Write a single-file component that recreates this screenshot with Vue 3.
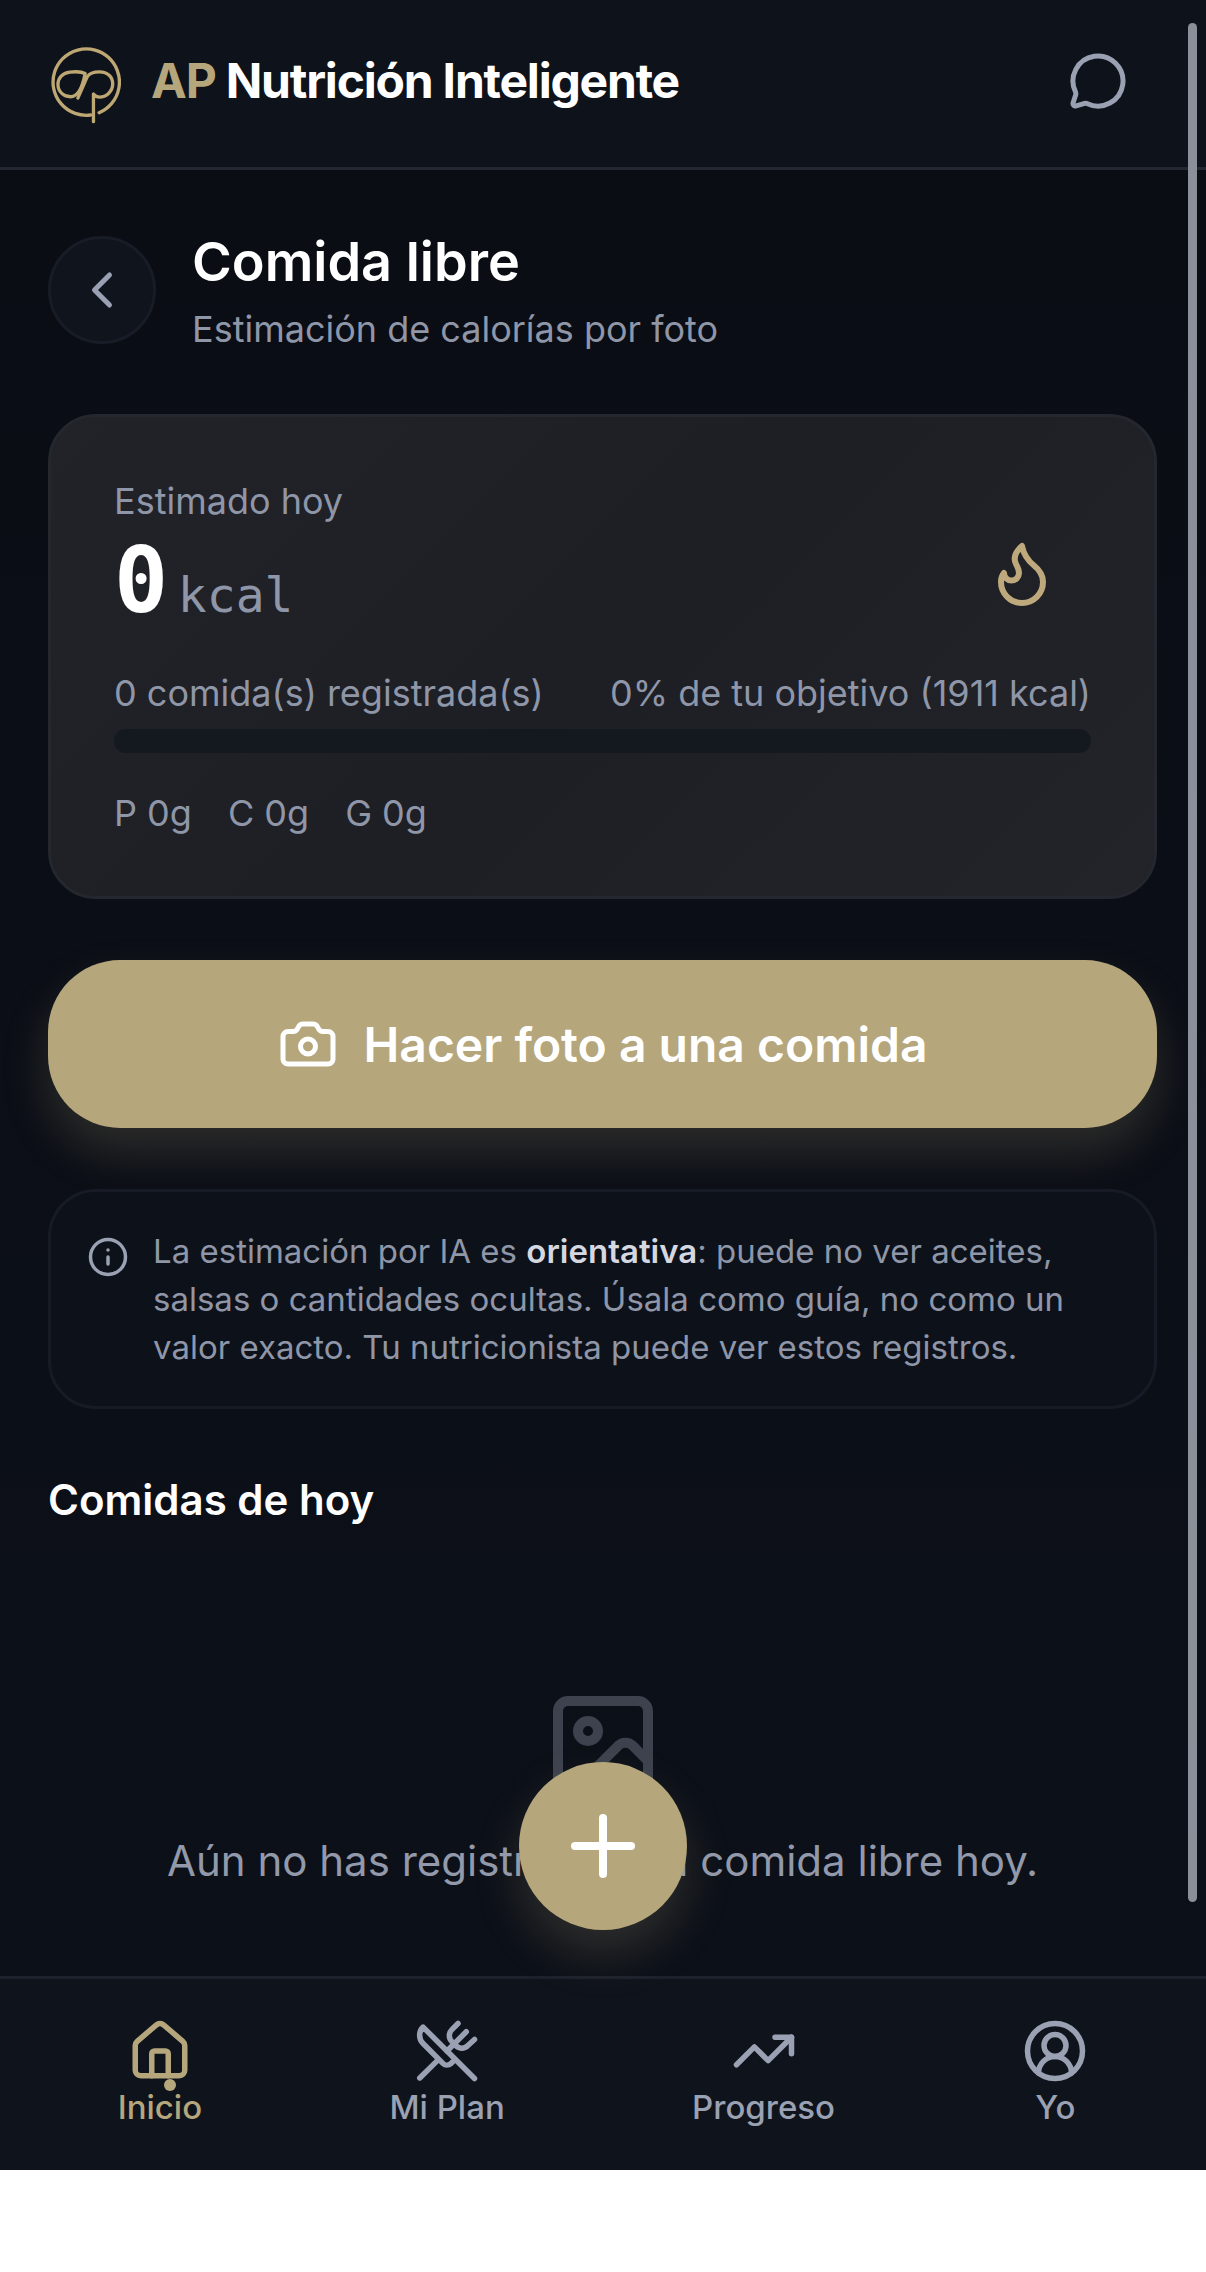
<script setup>
const macros = ["P 0g", "C 0g", "G 0g"];

// bottom tabs, icons are 24x24 stroke paths
const tabs = [
  {
    label: "Inicio",
    active: true,
    paths: [
      "M15 21v-8a1 1 0 0 0-1-1h-4a1 1 0 0 0-1 1v8",
      "M3 10a2 2 0 0 1 .709-1.528l7-5.999a2 2 0 0 1 2.582 0l7 5.999A2 2 0 0 1 21 10v9a2 2 0 0 1-2 2H5a2 2 0 0 1-2-2z"
    ]
  },
  {
    label: "Mi Plan",
    paths: [
      "m16 2-2.3 2.3a3 3 0 0 0 0 4.2l1.6 1.6a3 3 0 0 0 4.2 0L22 7.8",
      "M15 15 3.3 3.3a4.2 4.2 0 0 0 0 6l7.3 7.3c.7.7 2 .7 2.8 0L15 15Zm0 0 7 7",
      "m2.1 21.8 6.4-6.3",
      "m19 5-7 7"
    ]
  },
  {
    label: "Progreso",
    paths: ["M22 7 13.5 15.5 8.5 10.5 2 17", "M16 7h6v6"]
  },
  {
    label: "Yo",
    paths: [
      "M18 20a6 6 0 0 0-12 0",
      "M8 10a4 4 0 1 0 8 0a4 4 0 1 0-8 0",
      "M2 12a10 10 0 1 0 20 0a10 10 0 1 0-20 0"
    ]
  }
];
</script>

<template>
  <div class="app">
    <header class="topbar">
      <div class="brand">
        <svg class="logo" viewBox="60 40 220 265" fill="none" stroke="#bda874" stroke-width="10" stroke-linecap="round" stroke-linejoin="round">
          <path d="M188 275A100 100 0 1 1 214 268" />
          <path d="M172 150C160 144 140 144 126 146C102 149 90 165 90 183C90 205 108 220 128 220C150 220 164 190 172 150" />
          <path d="M150 224L178 160C186 147 200 145 215 145C240 145 255 160 255 181C255 205 235 221 215 221C208 221 202 218 197 212V295" />
        </svg>
        <span class="brand-name"><span class="gold">AP</span> Nutrición Inteligente</span>
      </div>
      <svg class="chat" viewBox="0 0 24 24" fill="none" stroke="#9aa1b2" stroke-width="2" stroke-linecap="round" stroke-linejoin="round">
        <path d="M2.992 16.342a2 2 0 0 1 .094 1.167l-1.065 3.29a1 1 0 0 0 1.236 1.168l3.413-.998a2 2 0 0 1 1.099.092 10 10 0 1 0-4.777-4.719" />
      </svg>
    </header>

    <main class="content">
      <div class="page-head">
        <button class="back">
          <svg viewBox="0 0 24 24" fill="none" stroke="#9aa1b2" stroke-width="2" stroke-linecap="round" stroke-linejoin="round">
            <path d="m15 18-6-6 6-6" />
          </svg>
        </button>
        <div>
          <h1>Comida libre</h1>
          <p class="subtitle">Estimación de calorías por foto</p>
        </div>
      </div>

      <section class="summary">
        <div class="summary-top">
          <div>
            <div class="muted">Estimado hoy</div>
            <div class="total"><span class="zero">0</span> <span class="unit">kcal</span></div>
          </div>
          <svg class="flame" viewBox="0 0 24 24" fill="none" stroke="#bda97c" stroke-width="2" stroke-linecap="round" stroke-linejoin="round">
            <path d="M8.5 14.5A2.5 2.5 0 0 0 11 12c0-1.38-.5-2-1-3-1.072-2.143-.224-4.054 2-6 .5 2.5 2 4.9 4 6.5 2 1.6 3 3.5 3 5.5a7 7 0 1 1-14 0c0-1.153.433-2.294 1-3a2.5 2.5 0 0 0 2.5 2.5z" />
          </svg>
        </div>
        <div class="progress-row muted">
          <span>0 comida(s) registrada(s)</span>
          <span>0% de tu objetivo (1911 kcal)</span>
        </div>
        <div class="bar"></div>
        <div class="macros muted">
          <span v-for="m in macros" :key="m">{{ m }}</span>
        </div>
      </section>

      <button class="photo-btn">
        <svg viewBox="0 0 24 24" fill="none" stroke="#fff" stroke-width="2" stroke-linecap="round" stroke-linejoin="round">
          <path d="M13.997 4a2 2 0 0 1 1.76 1.05l.486.9A2 2 0 0 0 18.003 7H20a2 2 0 0 1 2 2v9a2 2 0 0 1-2 2H4a2 2 0 0 1-2-2V9a2 2 0 0 1 2-2h1.997a2 2 0 0 0 1.759-1.048l.489-.904A2 2 0 0 1 10.004 4z" />
          <circle cx="12" cy="13" r="3" />
        </svg>
        Hacer foto a una comida
      </button>

      <div class="notice">
        <svg viewBox="0 0 24 24" fill="none" stroke="#9aa1b2" stroke-width="2" stroke-linecap="round" stroke-linejoin="round">
          <circle cx="12" cy="12" r="10" />
          <path d="M12 16v-4" />
          <path d="M12 8h.01" />
        </svg>
        <p>La estimación por IA es <strong>orientativa</strong>: puede no ver aceites, salsas o cantidades ocultas. Úsala como guía, no como un valor exacto. Tu nutricionista puede ver estos registros.</p>
      </div>

      <h2>Comidas de hoy</h2>

      <div class="empty">
        <svg viewBox="0 0 24 24" fill="none" stroke="#3d424e" stroke-width="2" stroke-linecap="round" stroke-linejoin="round">
          <rect x="3" y="3" width="18" height="18" rx="2" />
          <circle cx="9" cy="9" r="2" />
          <path d="m21 15-3.086-3.086a2 2 0 0 0-2.828 0L6 21" />
        </svg>
        <p>Aún no has registrado una comida libre hoy.</p>
      </div>
    </main>

    <nav class="tabs">
      <div v-for="tab in tabs" :key="tab.label" class="tab" :class="{ active: tab.active }">
        <svg viewBox="0 0 24 24" fill="none" stroke="currentColor" stroke-width="2" stroke-linecap="round" stroke-linejoin="round">
          <path v-for="d in tab.paths" :key="d" :d="d" />
        </svg>
        <span>{{ tab.label }}</span>
        <i v-if="tab.active" class="dot"></i>
      </div>
    </nav>

    <button class="fab">
      <svg viewBox="0 0 24 24" fill="none" stroke="#fff" stroke-width="2" stroke-linecap="round" stroke-linejoin="round">
        <path d="M5 12h14" />
        <path d="M12 5v14" />
      </svg>
    </button>

    <div class="scrollbar"></div>
  </div>
</template>

<style>
body {
  background: #fff;
}
</style>

<style scoped>
.app {
  position: relative;
  display: flex;
  flex-direction: column;
  width: 1206px;
  height: 2170px;
  overflow: hidden;
  background: #0b0e15;
  color: #fff;
  font-family: Inter, "Liberation Sans", sans-serif;
}

.topbar {
  display: flex;
  flex: none;
  align-items: center;
  justify-content: space-between;
  box-sizing: border-box;
  height: 170px;
  padding: 0 78px 6px 48px;
  background: #0e121b;
  border-bottom: 3px solid #232732;
}

.brand {
  display: flex;
  align-items: center;
  gap: 30px;
}

.logo {
  width: 73px;
  height: 88px;
}

.brand-name {
  font-size: 48px;
  font-weight: 700;
  letter-spacing: -1.2px;
}

.gold {
  color: #b5a67c;
}

.chat {
  width: 60px;
  height: 60px;
}

.content {
  flex: 1;
  min-height: 0;
  padding: 56px 49px 0 48px;
  background: linear-gradient(#0a0d14, #0c1018);
}

.page-head {
  display: flex;
  align-items: center;
  gap: 36px;
  margin-bottom: 61px;
}

.back {
  display: flex;
  align-items: center;
  justify-content: center;
  box-sizing: border-box;
  width: 108px;
  height: 108px;
  padding: 0;
  background: #10141d;
  border: 3px solid #181c26;
  border-radius: 50%;
}

.back svg {
  width: 60px;
  height: 60px;
}

h1 {
  margin: 0;
  font-size: 54px;
  font-weight: 600;
  line-height: 72px;
}

.subtitle {
  margin: 7px 0 0;
  font-size: 36px;
  line-height: 48px;
  color: #8f96a8;
}

.muted {
  font-size: 36px;
  line-height: 48px;
  color: #8f96a8;
}

.summary {
  box-sizing: border-box;
  height: 485px;
  padding: 60px 63px;
  background: linear-gradient(135deg, #212328 0%, #1d1f25 50%, #222429 100%);
  border: 3px solid #25272e;
  border-radius: 48px;
}

.summary-top {
  display: flex;
  align-items: center;
  justify-content: space-between;
  padding-right: 33px;
}

.total {
  height: 144px;
  font-family: "DejaVu Sans Mono", "Liberation Mono", monospace;
  line-height: 90px;
  padding-top: 11px;
  box-sizing: border-box;
}

.zero {
  font-size: 90px;
  font-weight: 700;
}

.unit {
  font-size: 48px;
  color: #8f96a8;
}

.flame {
  width: 72px;
  height: 72px;
}

.progress-row {
  display: flex;
  justify-content: space-between;
}

.bar {
  height: 24px;
  margin-top: 12px;
  background: #141920;
  border-radius: 12px;
}

.macros {
  display: flex;
  gap: 36px;
  margin-top: 36px;
}

.photo-btn {
  display: flex;
  align-items: center;
  justify-content: center;
  gap: 26px;
  width: 100%;
  height: 168px;
  margin-top: 61px;
  background: #b5a67c;
  border: 0;
  border-radius: 72px;
  box-shadow: 0 24px 48px rgba(181, 166, 124, 0.2);
  color: #fff;
  font-family: inherit;
  font-size: 48px;
  font-weight: 600;
}

.photo-btn svg {
  width: 60px;
  height: 60px;
}

.notice {
  display: flex;
  gap: 24px;
  box-sizing: border-box;
  height: 220px;
  margin-top: 61px;
  padding: 35px 36px;
  background: #0d1119;
  border: 3px solid #171b25;
  border-radius: 48px;
}

.notice svg {
  flex: none;
  width: 42px;
  height: 42px;
  margin-top: 9px;
}

.notice p {
  margin: 0;
  font-size: 33px;
  line-height: 48px;
  color: #8f96a8;
}

.notice strong {
  color: #d5d8e0;
  font-weight: 600;
}

h2 {
  margin: 61px 0 0;
  font-size: 42px;
  font-weight: 600;
  line-height: 60px;
}

.empty {
  display: flex;
  flex-direction: column;
  align-items: center;
  margin-top: 156px;
}

.empty svg {
  width: 120px;
  height: 120px;
}

.empty p {
  margin: 22px 0 0;
  font-size: 42px;
  line-height: 66px;
  color: #9299aa;
  white-space: nowrap;
}

.tabs {
  display: flex;
  flex: none;
  justify-content: space-around;
  box-sizing: border-box;
  height: 194px;
  padding: 39px 24px 0;
  background: #0f131c;
  border-top: 3px solid #1d212c;
}

.tab {
  position: relative;
  display: flex;
  flex-direction: column;
  align-items: center;
  min-width: 60px;
  color: #9aa1b2;
}

.tab svg {
  width: 66px;
  height: 66px;
}

.tab span {
  margin-top: 2px;
  font-size: 33px;
  font-weight: 500;
  line-height: 42px;
}

.tab.active {
  color: #b5a67c;
}

.dot {
  position: absolute;
  top: 61px;
  left: 46px;
  width: 12px;
  height: 12px;
  background: #b5a67c;
  border-radius: 50%;
}

.fab {
  position: absolute;
  top: 1762px;
  left: 519px;
  display: flex;
  align-items: center;
  justify-content: center;
  width: 168px;
  height: 168px;
  padding: 0;
  background: #b5a67c;
  border: 0;
  border-radius: 50%;
  box-shadow: 0 24px 48px rgba(181, 166, 124, 0.2);
}

.fab svg {
  width: 96px;
  height: 96px;
}

.scrollbar {
  position: absolute;
  top: 23px;
  left: 1188px;
  width: 9px;
  height: 1879px;
  background: #8b8f99;
  border-radius: 5px;
}
</style>
